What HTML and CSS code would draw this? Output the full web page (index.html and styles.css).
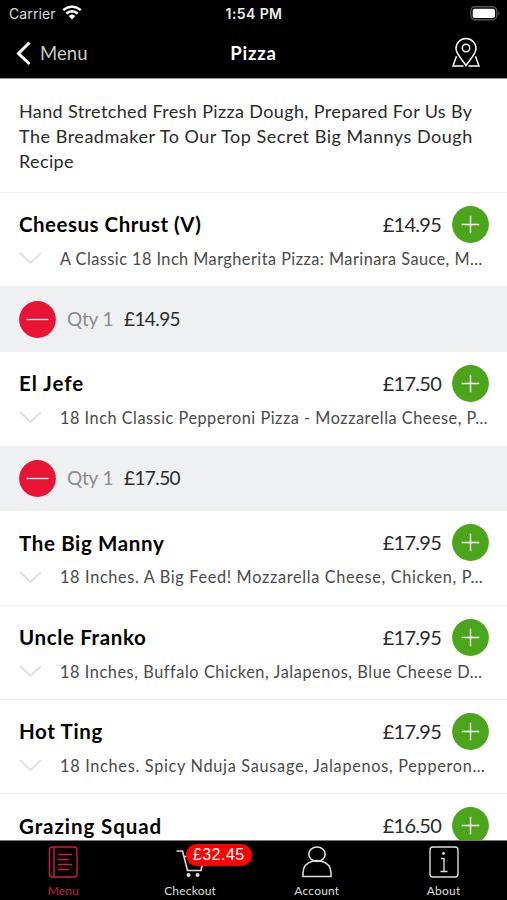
FILE: index.html
```html
<!DOCTYPE html>
<html lang="en">
<head>
<meta charset="utf-8">
<title>Pizza</title>
<link rel="stylesheet" href="styles.css">
</head>
<body>
<svg class="defs" width="0" height="0">
  <symbol id="plus" viewBox="0 0 37 37"><circle cx="18.5" cy="18.5" r="18.4" fill="#4aa51a"/><path d="M18.5 9.700v17.600M9.700 18.500h17.600" stroke="#fff" stroke-width="1.400"/></symbol>
  <symbol id="minus" viewBox="0 0 37 37"><circle cx="18.5" cy="18.5" r="18.4" fill="#e91335"/><path d="M7.5 18.5h22" stroke="#fff" stroke-width="1.3"/></symbol>
  <symbol id="chevron" viewBox="0 0 23 13"><path d="M1 1l10.500 10L22 1" fill="none" stroke="#e0e0e0" stroke-width="1.800"/></symbol>
</svg>
<div class="app">
  <header>
    <div class="status">
      <span class="carrier">Carrier</span>
      <svg class="wifi" width="20" height="16" viewBox="0 0 20 16"><g fill="none" stroke="#fff" stroke-width="2.500"><path d="M1.300 5.200a12.500 12.500 0 0 1 17.400 0"/><path d="M4.300 8.600a8.200 8.200 0 0 1 11.400 0"/></g><path d="M6.600 11a5 5 0 0 1 6.800 0L10 14.500z" fill="#fff"/></svg>
      <span class="time">1:54 PM</span>
      <svg class="battery" width="31" height="15" viewBox="0 0 31 15"><rect x=".8" y=".8" width="26" height="13" rx="4" fill="none" stroke="#555" stroke-width="1.400"/><rect x="2.700" y="2.700" width="22.300" height="9.300" rx="2" fill="#fff"/><path d="M28.500 5q2 2.400 0 4.800z" fill="#666"/></svg>
    </div>
    <nav class="nav">
      <a class="back"><svg width="16" height="25" viewBox="0 0 16 25"><path d="M14.500 1.500L3.500 12.500l11 10.500" fill="none" stroke="#fff" stroke-width="3"/></svg><span>Menu</span></a>
      <h1>Pizza</h1>
      <svg class="pin" width="30" height="32" viewBox="0 0 30 32" fill="none" stroke="#fff" stroke-width="1.500"><path d="M15 28.500C11.500 23 5 17 5 11.500a10 10 0 0 1 20 0C25 17 18.500 23 15 28.500z"/><circle cx="15" cy="11" r="3.700"/><path d="M5.500 19.300L2 29h10.500M24.500 19.300L28 29H17.500"/></svg>
    </nav>
  </header>
  <main>
    <p class="intro"><span>Hand Stretched Fresh Pizza Dough, Prepared For Us By</span><span class="wide">The Breadmaker To Our Top Secret Big Mannys Dough</span><span>Recipe</span></p>
    <section class="item ordered"><div class="head"><h2 class="long">Cheesus Chrust (V)</h2><span class="price">£14.95</span><svg class="round"><use href="#plus"/></svg></div><div class="detail d1"><svg class="chev"><use href="#chevron"/></svg><span>A Classic 18 Inch Margherita Pizza: Marinara Sauce, M…</span></div></section>
    <div class="qty"><svg class="round"><use href="#minus"/></svg><span class="count">Qty 1</span><span class="sum">£14.95</span></div>
    <section class="item ordered"><div class="head"><h2 class="loose">El Jefe</h2><span class="price">£17.50</span><svg class="round"><use href="#plus"/></svg></div><div class="detail d2"><svg class="chev"><use href="#chevron"/></svg><span>18 Inch Classic Pepperoni Pizza - Mozzarella Cheese, P…</span></div></section>
    <div class="qty"><svg class="round"><use href="#minus"/></svg><span class="count">Qty 1</span><span class="sum">£17.50</span></div>
    <section class="item"><div class="head"><h2>The Big Manny</h2><span class="price">£17.95</span><svg class="round"><use href="#plus"/></svg></div><div class="detail d3"><svg class="chev"><use href="#chevron"/></svg><span>18 Inches. A Big Feed! Mozzarella Cheese, Chicken, P…</span></div></section>
    <section class="item"><div class="head"><h2>Uncle Franko</h2><span class="price">£17.95</span><svg class="round"><use href="#plus"/></svg></div><div class="detail d4"><svg class="chev"><use href="#chevron"/></svg><span>18 Inches, Buffalo Chicken, Jalapenos, Blue Cheese D…</span></div></section>
    <section class="item"><div class="head"><h2>Hot Ting</h2><span class="price">£17.95</span><svg class="round"><use href="#plus"/></svg></div><div class="detail d5"><svg class="chev"><use href="#chevron"/></svg><span>18 Inches. Spicy Nduja Sausage, Jalapenos, Pepperon…</span></div></section>
    <section class="item last"><div class="head"><h2 class="loose">Grazing Squad</h2><span class="price">£16.50</span><svg class="round"><use href="#plus"/></svg></div></section>
  </main>
  <footer>
    <a class="tab active"><svg width="30" height="32" viewBox="0 0 30 32" fill="none" stroke="currentColor" stroke-width="1.400"><rect x="1.500" y="1" width="27.500" height="30" rx="3"/><path d="M6 1v30M10 8.500h14M10 13.500h11M10 18.500h14M10 23.500h11"/></svg><span>Menu</span></a>
    <a class="tab"><svg width="30" height="32" viewBox="0 0 30 32" fill="none" stroke="currentColor" stroke-width="1.600"><path d="M1.500 5h6l5 19.500h13.500l3-14H9"/><circle cx="13.500" cy="29" r="2" fill="currentColor" stroke="none"/><circle cx="22.500" cy="29" r="2" fill="currentColor" stroke="none"/></svg><b class="badge">£32.45</b><span>Checkout</span></a>
    <a class="tab"><svg width="30" height="32" viewBox="0 0 30 32" fill="none" stroke="currentColor" stroke-width="1.600"><ellipse cx="15" cy="8.200" rx="8.200" ry="7.200"/><path d="M11.500 15C5 16.500 1 21 1 27v3.500h28V27c0-6-4-10.500-10.500-12q-3.500-.7-7 0"/></svg><span>Account</span></a>
    <a class="tab"><svg width="30" height="32" viewBox="0 0 30 32" fill="none" stroke="currentColor" stroke-width="1.400"><rect x="1" y="1" width="28" height="30" rx="3"/><path d="M12 12.500h3V25M11.500 25.500h7"/><circle cx="14.500" cy="7.500" r="1.400" fill="currentColor" stroke="none"/></svg><span>About</span></a>
  </footer>
</div>
</body>
</html>
```
FILE: styles.css
```css
* { box-sizing: border-box; margin: 0; padding: 0; }
body { font-family: Lato, "Liberation Sans", sans-serif; background: #fff; color: #2a2a2a; }
.defs { display: none; }
.app { height: 900px; display: flex; flex-direction: column; overflow: hidden; }
header { height: 79px; flex: none; background: #000; color: #fff; border-bottom: 1px solid #999; }
.status { height: 28px; display: grid; grid-template-columns: 53px 1fr auto 1fr 31px; align-items: center; padding: 0 6px 0 9px; font-family: Inter, sans-serif; font-size: 14px; }
.carrier { color: #ddd; letter-spacing: .1px; position: relative; top: -1px; }
.wifi { margin-top: -2px; }
.time { font-weight: 600; color: #eee; letter-spacing: .4px; margin-left: -24px; position: relative; top: -1px; }
.battery { grid-column: 5; margin-top: -2px; }
.nav { height: 50px; display: grid; grid-template-columns: 1fr auto 1fr; align-items: center; padding: 0 26px 0 15px; }
.back { display: flex; align-items: center; gap: 9px; font-size: 18.5px; letter-spacing: .1px; color: #ccc; }
.nav h1 { font-size: 18.5px; letter-spacing: .8px; margin-left: 11px; }
.pin { justify-self: end; }
main { flex: 1; min-height: 0; overflow: hidden; }
.intro { height: 113.600px; padding: 20px 19px 0; border-bottom: 1px solid #eee; font-size: 18px; line-height: 25px; letter-spacing: .37px; white-space: nowrap; }
.intro span { display: block; }
.intro .wide { letter-spacing: .52px; }
.item { height: 94.400px; padding: 13px 18px 0 19px; border-bottom: 1px solid #f1f1f1; }
.ordered { height: 93.700px; border: 0; }
.head { display: flex; align-items: center; height: 37px; }
.head h2 { flex: 1; font-size: 20.500px; letter-spacing: .64px; color: #000; }
.head h2.long { letter-spacing: .5px; }
.head h2.loose { letter-spacing: .93px; }
.price { font-size: 20px; letter-spacing: -.75px; margin-right: 11px; position: relative; top: -.5px; }
.round { width: 37px; height: 37px; flex: none; }
.detail { display: flex; align-items: center; height: 32px; gap: 18px; font-size: 16.300px; letter-spacing: .46px; color: #4a4a4a; white-space: nowrap; }
.detail span { position: relative; top: -.5px; }
.d2 { letter-spacing: .51px; }
.d3 { letter-spacing: .66px; }
.d4 { letter-spacing: .57px; }
.d5 { letter-spacing: .7px; }
.chev { width: 23px; height: 13px; flex: none; }
.qty { height: 65.600px; background: #eef0f2; display: flex; align-items: center; padding-left: 19px; font-size: 19px; }
.qty span { position: relative; top: -1px; }
.count { color: #8a8c8e; margin-left: 11px; width: 57px; letter-spacing: -.2px; }
.sum { letter-spacing: -.6px; }
footer { height: 60px; flex: none; background: #000; color: #ddd; display: grid; grid-template-columns: repeat(4, 1fr); border-top: 1px solid #777; }
.tab { display: flex; flex-direction: column; align-items: center; padding-top: 5px; position: relative; font-size: 12px; letter-spacing: .2px; line-height: 14px; gap: 6px; }
.active { color: #c91e3e; }
.badge { position: absolute; left: 59px; top: 3px; width: 66px; height: 22px; border-radius: 11px; background: #f00; color: #fff; font: 16px/22px "Liberation Sans", sans-serif; letter-spacing: .5px; text-align: center; }
```
